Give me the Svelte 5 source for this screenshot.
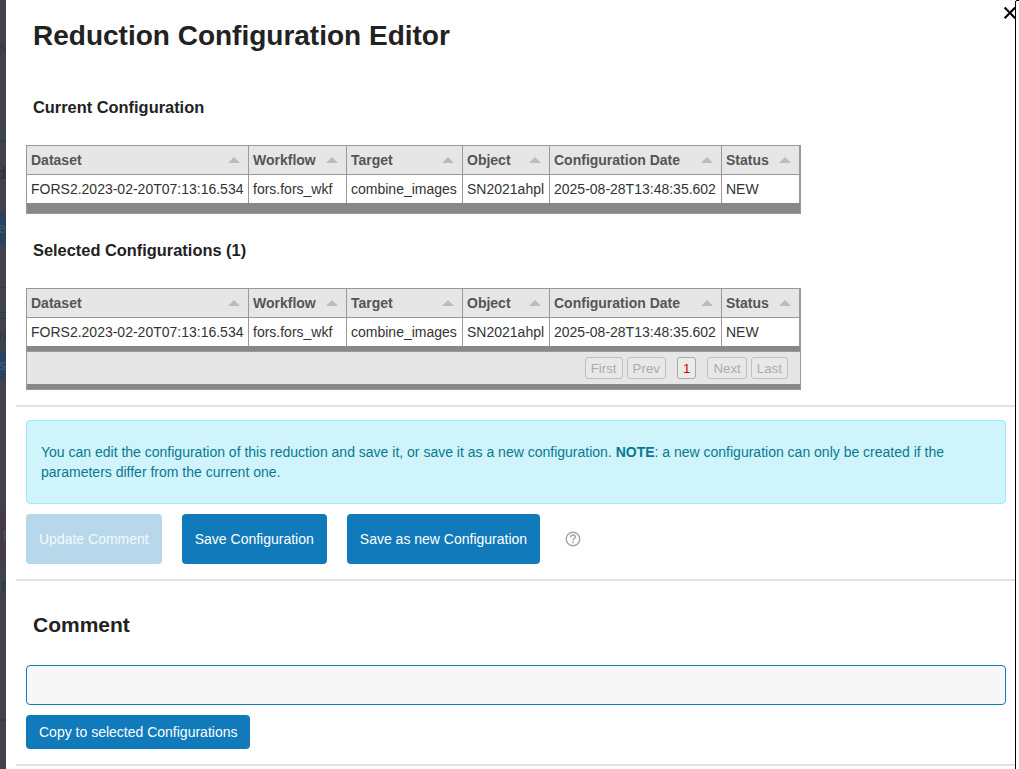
<script>
  const columns = [
    { title: 'Dataset', value: 'FORS2.2023-02-20T07:13:16.534' },
    { title: 'Workflow', value: 'fors.fors_wkf' },
    { title: 'Target', value: 'combine_images' },
    { title: 'Object', value: 'SN2021ahpl' },
    { title: 'Configuration Date', value: '2025-08-28T13:48:35.602' },
    { title: 'Status', value: 'NEW' }
  ];
  const tail = [
    { top: 39, text: 's', color: '#30343f', size: 13 },
    { top: 166, text: 'd', color: '#30333b', size: 16, bold: true },
    { top: 220, text: 'e', color: '#46576e', size: 14 },
    { top: 328, text: 'n', color: '#30333b', size: 14 },
    { top: 357, text: 's', color: '#3f5f80', size: 14 },
    { top: 528, text: 'l', color: '#5a5960', size: 14 },
    { top: 579, text: 't', color: '#244238', size: 18 }
  ];
  let comment = $state('');
</script>

{#snippet grid(paged)}
  <div class="table">
    <div class="row head">
      {#each columns as c}
        <div class="cell"><span>{c.title}</span><i class="arrow"></i></div>
      {/each}
    </div>
    <div class="row">
      {#each columns as c}<div class="cell">{c.value}</div>{/each}
    </div>
    {#if paged}
      <div class="band"></div>
      <div class="pager">
        <button class="page" disabled>First</button>
        <button class="page" disabled>Prev</button>
        <button class="page active">1</button>
        <button class="page" disabled>Next</button>
        <button class="page" disabled>Last</button>
      </div>
      <div class="band"></div>
    {:else}
      <div class="band tall"></div>
    {/if}
  </div>
{/snippet}

<div class="screen">
  <aside class="backdrop">
    <i class="tint line" style="top:140px"></i>
    <i class="tint blue" style="top:211px;height:34px"></i>
    <i class="tint rule" style="top:287px"></i>
    <i class="tint rule" style="top:312px"></i>
    <i class="tint line" style="top:317px"></i>
    <i class="tint blue" style="top:351px;height:29px"></i>
    <i class="tint red" style="top:511px;height:50px"></i>
    <i class="tint navy" style="top:719px"></i>
    {#each tail as t}
      <span style="top:{t.top}px;color:{t.color};font-size:{t.size}px;font-weight:{t.bold ? 700 : 400}">{t.text}</span>
    {/each}
  </aside>

  <main class="modal">
    <h1>Reduction Configuration Editor</h1>
    <h4>Current Configuration</h4>
    {@render grid(false)}
    <h4 class="second">Selected Configurations (1)</h4>
    {@render grid(true)}
    <hr />
    <div class="notice">
      You can edit the configuration of this reduction and save it, or save it as a new configuration.
      <b>NOTE</b>: a new configuration can only be created if the parameters differ from the current one.
    </div>
    <div class="actions">
      <button class="btn big" disabled>Update Comment</button>
      <button class="btn big">Save Configuration</button>
      <button class="btn big">Save as new Configuration</button>
      <svg class="help" width="16" height="16" viewBox="0 0 16 16" fill="none" stroke="#a5a5a5">
        <circle cx="8" cy="8" r="6.8" stroke-width="1.4" />
        <path d="M5.7 6.4V6.1a2.3 2.1 0 0 1 4.6 0c0 1.5-2.3 1.6-2.3 3.3" stroke-width="1.5" />
        <path d="M8 10.6v1.6" stroke-width="1.6" />
      </svg>
    </div>
    <hr class="after-actions" />
    <h2>Comment</h2>
    <input class="comment" bind:value={comment} />
    <button class="btn copy">Copy to selected Configurations</button>
    <hr class="last" />
  </main>

  <i class="frame"></i>
  <svg class="close" width="14" height="14" viewBox="0 0 14 14" stroke="#000" stroke-width="2.1" fill="none">
    <path d="M1.6 1.6l10.6 10.6M12.2 1.6L1.6 12.2" />
  </svg>
</div>

<style>
  :global(body) { margin: 0; overflow: hidden; }
  .screen {
    position: relative; display: flex; width: 1019px; height: 769px; overflow: hidden;
    background: #fff; font: 14px/20px "Liberation Sans", Arial, sans-serif; color: #333;
  }
  .screen * { box-sizing: border-box; }
  .backdrop { position: relative; flex: 0 0 6px; height: 769px; background: #40434b; overflow: hidden; }
  .backdrop span { position: absolute; right: 0; line-height: 16px; }
  .tint { position: absolute; left: 0; width: 6px; }
  .line { height: 2px; background: #26415c; }
  .rule { height: 1px; background: #353840; }
  .navy { height: 2px; background: #303b53; }
  .blue { background: #29425f; }
  .red { background: #433b46; }
  .modal { flex: 0 0 1009px; padding: 0 0 0 10px; display: flex; flex-direction: column; align-items: flex-start; }
  h1, h2, h4 { margin: 0 0 0 17px; color: #222; font-weight: 700; white-space: nowrap; }
  h1 { font-size: 28px; line-height: 36px; margin-top: 18px; }
  h4 { font-size: 16.4px; line-height: 20px; margin-top: 43px; margin-bottom: 28px; }
  h4.second { margin-top: 26px; margin-bottom: 28px; }
  h2 { font-size: 21px; line-height: 28px; margin-top: 30px; }
  .table { width: 775px; margin-left: 10px; border: 1px solid #999; background: #888; }
  .row { display: grid; grid-template-columns: 222px 98px 116px 87px 172px 78px; height: 28px; background: #fff; }
  .cell { border-right: 1px solid #999; padding: 0 4px; line-height: 28px; white-space: nowrap; overflow: hidden; }
  .head { height: 29px; background: #e6e6e6; border-bottom: 1px solid #999; color: #555; font-weight: 700; }
  .head .cell { display: flex; justify-content: space-between; align-items: center; padding-right: 8px; }
  .arrow { border: 6px solid transparent; border-top: 0; border-bottom: 6px solid #bbb; }
  .band { height: 5px; background: #888; }
  .band.tall { height: 10px; }
  .pager {
    height: 33px; border-top: 1px solid #999; background: #e6e6e6;
    display: flex; justify-content: flex-end; align-items: center; gap: 4px; padding-right: 12px;
  }
  .page {
    height: 22px; padding: 1px 5px 0; border: 1px solid #aaa; border-radius: 3px; background: rgba(255, 255, 255, .2);
    font: 13.333px/18px "Liberation Sans", Arial, sans-serif; color: #555;
  }
  .page:disabled { opacity: .4; border-color: #888; }
  .page.active { color: #d00; margin: 0 7px; }
  hr { margin: 15px 0 0; border: 0; height: 2px; width: 999px; background: #e2e2e2; }
  .notice {
    width: 980px; height: 84px; margin: 13px 0 0 10px; padding: 21px 60px 0 14px;
    background: #cff4fc; border: 1px solid #9eeaf9; border-radius: 4px; color: #087990;
  }
  .actions { display: flex; align-items: center; gap: 20px; margin: 10px 0 0 10px; }
  .btn {
    border: 0; border-radius: 4px; background: #107abb; color: #fff; padding: 0 13px; white-space: nowrap;
    font: 14px/20px "Liberation Sans", Arial, sans-serif;
  }
  .btn:disabled { background: #b7d8eb; color: #f4f9fc; }
  .big { height: 50px; }
  .help { margin-left: 5px; }
  .after-actions { margin-top: 15px; }
  .comment { width: 980px; height: 40px; margin: 26px 0 0 10px; border: 1px solid #107abb; border-radius: 4px; background: #f7f7f7; }
  .copy { height: 34px; margin: 10px 0 0 10px; }
  .last { margin-top: 15px; }
  .close { position: absolute; left: 1003px; top: 6px; }
  .frame { position: absolute; left: 1015px; top: 0; width: 6px; height: 771px; border: 1px solid #000; border-top-left-radius: 2px; }
</style>
